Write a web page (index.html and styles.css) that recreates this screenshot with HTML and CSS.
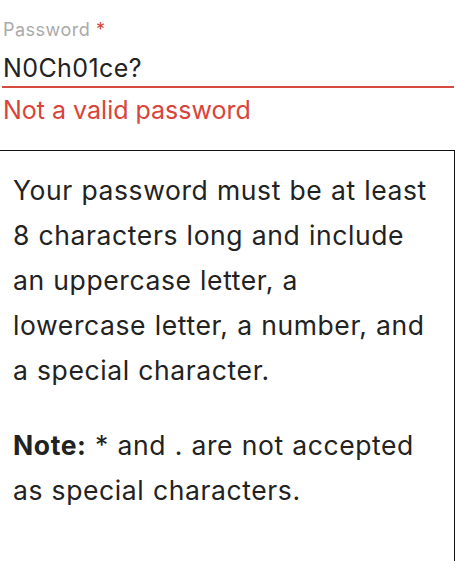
FILE: index.html
```html
<!DOCTYPE html>
<html lang="en">
<head>
<meta charset="UTF-8">
<title>Password</title>
<link rel="stylesheet" href="styles.css">
</head>
<body>
	<div class="field">
		<label class="field-label">Password <span class="req">*</span></label>
		<div class="field-input">N0Ch01ce?</div>
		<div class="field-error">Not a valid password</div>
	</div>
	<div class="hint">
		<p>Your password must be at least 8 characters long and include an uppercase letter, a lowercase letter, a number, and a special character.</p>
		<p><b>Note:</b> * and . are not accepted as special characters.</p>
	</div>
</body>
</html>
```

FILE: styles.css
```css
*{margin: 0; padding: 0; box-sizing: border-box;}
body{font-family: Inter, "Liberation Sans", sans-serif; color: #222; background: #fff;}

.field{padding: 19px 2px 0 3px;}
.field-label{display: block; font-size: 18px; line-height: 22px; letter-spacing: 0.5px; color: #aaa;}
.req{color: #d9443a;}
.field-input{font-size: 25px; line-height: 30px; letter-spacing: 0.4px; margin: 12px 0 0 -1px;
	padding: 0 0 3px 1px; border-bottom: 2px solid #d64a3e;}
.field-error{font-size: 25px; line-height: 30px; color: #d9443a; margin-top: 7px;}

/* requirements box, runs off the bottom of the page */
.hint{margin: 25px 1px 0 -1px; border: 1px solid #111; border-bottom: none;
	padding: 17px 21px 0 13px; min-height: 420px; font-size: 26.5px; line-height: 45px;
	letter-spacing: 0.6px; word-spacing: 0.5px;}
.hint p + p{margin-top: 30px;}
```
